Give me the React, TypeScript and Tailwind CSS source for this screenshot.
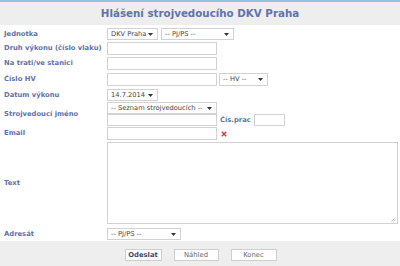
import React from "react";

const Label = ({ children }: { children: React.ReactNode }) => (
  <div className="w-[107px] shrink-0 pl-[4px] text-[6.8px] font-bold text-[#5f72aa] leading-none">
    {children}
  </div>
);

const Arrow = () => (
  <svg width="5" height="3" viewBox="0 0 5 3" className="shrink-0">
    <path d="M0 0 L5 0 L2.5 3 Z" fill="#333" />
  </svg>
);

const Select = ({ text, w }: { text: string; w: string }) => (
  <div
    className={`${w} h-full flex items-center justify-between pl-[3px] pr-[4px] bg-white border border-[#d2d2d2] text-[6.7px] text-[#444] leading-none`}
  >
    <span className="whitespace-nowrap">{text}</span>
    <Arrow />
  </div>
);

const Input = ({ w }: { w: string }) => (
  <div className={`${w} h-full bg-white border border-[#d2d2d2]`} />
);

export default function App() {
  return (
    <div className="w-[400px] h-[266px] bg-white overflow-hidden flex flex-col font-['DejaVu_Sans',sans-serif]">
      {/* Header */}
      <div className="h-[25px] shrink-0 border-t-2 border-[#8cc3ea] bg-[#eeeeee] flex items-center justify-center">
        <h1 className="text-[10.3px] font-bold text-[#5f73ac] leading-none">
          Hlášení strojvedoucího DKV Praha
        </h1>
      </div>

      {/* Form rows */}
      <div className="mt-[3px] h-[12px] flex items-center">
        <Label>Jednotka</Label>
        <div className="h-full flex gap-[3px]">
          <Select text="DKV Praha" w="w-[51px]" />
          <Select text="-- PJ/PS --" w="w-[73px]" />
        </div>
      </div>

      <div className="mt-[2px] h-[13px] flex items-center">
        <Label>Druh výkonu (číslo vlaku)</Label>
        <Input w="w-[110px]" />
      </div>

      <div className="mt-[2px] h-[13px] flex items-center">
        <Label>Na trati/ve stanici</Label>
        <Input w="w-[110px]" />
      </div>

      <div className="mt-[3px] h-[13px] flex items-center">
        <Label>Číslo HV</Label>
        <div className="h-full flex gap-[2px]">
          <Input w="w-[110px]" />
          <Select text="-- HV --" w="w-[49px]" />
        </div>
      </div>

      <div className="mt-[3px] h-[12px] flex items-center">
        <Label>Datum výkonu</Label>
        <Select text="14.7.2014" w="w-[51px]" />
      </div>

      <div className="mt-[1px] h-[24px] flex items-center">
        <Label>Strojvedoucí jméno</Label>
        <div className="h-full flex flex-col">
          <div className="h-[12px]">
            <Select text="-- Seznam strojvedoucích --" w="w-[110px]" />
          </div>
          <div className="h-[12px] flex items-center">
            <Input w="w-[110px]" />
            <span className="ml-[3px] text-[6.8px] font-bold text-[#5f72aa] leading-none">
              Čís.prac
            </span>
            <div className="ml-[3px] h-full">
              <Input w="w-[31px]" />
            </div>
          </div>
        </div>
      </div>

      <div className="mt-[1px] h-[13px] flex items-center">
        <Label>Email</Label>
        <Input w="w-[110px]" />
        <svg width="6" height="6" viewBox="0 0 6 6" className="ml-[4px]">
          <path d="M0.8 0.8 L5.2 5.2 M5.2 0.8 L0.8 5.2" stroke="#d53a3a" strokeWidth="1.4" />
        </svg>
      </div>

      <div className="mt-[2px] h-[82px] flex items-center">
        <Label>Text</Label>
        <div className="relative w-[291px] h-full bg-white border border-[#d2d2d2]">
          <svg width="5" height="5" viewBox="0 0 5 5" className="absolute right-[1px] bottom-[1px]">
            <path d="M4.5 0.5 L0.5 4.5 M4.5 2.5 L2.5 4.5" stroke="#aaa" strokeWidth="0.7" />
          </svg>
        </div>
      </div>

      <div className="mt-[4px] h-[12px] flex items-center">
        <Label>Adresát</Label>
        <Select text="-- PJ/PS --" w="w-[74px]" />
      </div>

      {/* Footer buttons */}
      <div className="mt-[1px] flex-1 bg-[#eeeeee] flex items-start justify-center pt-[8px] pl-[1px] gap-[12px]">
        <button className="w-[37px] h-[12px] bg-white border border-[#cfcfcf] text-[6.8px] font-bold text-[#3d4a6b] leading-none">
          Odeslat
        </button>
        <button className="w-[45px] h-[12px] bg-white border border-[#cfcfcf] text-[6.8px] text-[#666] leading-none">
          Náhled
        </button>
        <button className="w-[46px] h-[12px] bg-white border border-[#cfcfcf] text-[6.8px] text-[#666] leading-none">
          Konec
        </button>
      </div>
    </div>
  );
}
